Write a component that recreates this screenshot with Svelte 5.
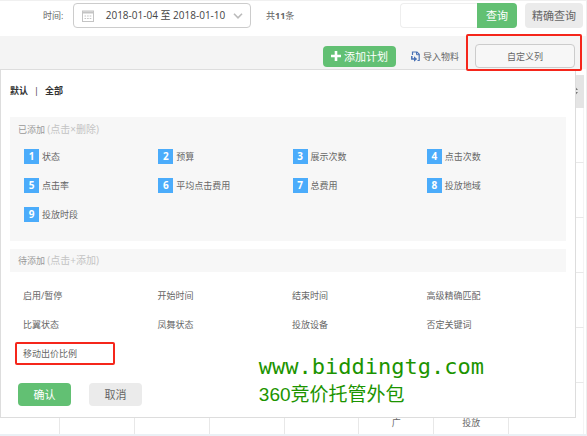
<script lang="ts">
  let added = $state([
    "状态", "预算", "展示次数", "点击次数",
    "点击率", "平均点击费用", "总费用", "投放地域",
    "投放时段",
  ]);

  let waiting = $state([
    "启用/暂停", "开始时间", "结束时间", "高级精确匹配",
    "比翼状态", "凤舞状态", "投放设备", "否定关键词",
    "移动出价比例",
  ]);

  const highlighted = "移动出价比例";
  const columns = ["", "", "", "", "", "广", "投放", ""];
  const emptyRows = [1, 2, 3, 4, 5];

  let keyword = $state("");
  let showPanel = $state(true);

  function addColumn(name: string) {
    waiting = waiting.filter((item) => item !== name);
    added = [...added, name];
  }

  function removeColumn(name: string) {
    added = added.filter((item) => item !== name);
    waiting = [...waiting, name];
  }

  function addAll() {
    added = [...added, ...waiting];
    waiting = [];
  }
</script>

<div class="page">
  <header class="filters">
    <label class="caption" for="date-range">时间:</label>
    <button class="date-range" id="date-range">
      <svg width="12" height="12" viewBox="0 0 12 12" fill="none" stroke="#c4c4c4">
        <rect x="0.5" y="1" width="11" height="10.5" />
        <path d="M0.5 2.5h11" stroke-width="2" />
        <path d="M2.5 6h7M2.5 8.5h7" stroke-dasharray="1.6 1" />
      </svg>
      <span>2018-01-04 至 2018-01-10</span>
      <svg width="10" height="6" viewBox="0 0 10 6" fill="none" stroke="#bbb" stroke-width="1.6">
        <path d="M1 0.8l4 4 4-4" />
      </svg>
    </button>
    <span class="total">共<b>11</b>条</span>
    <form class="search" onsubmit={(e) => e.preventDefault()}>
      <input type="text" aria-label="查询" bind:value={keyword} />
      <button class="query">查询</button>
    </form>
    <button class="exact">精确查询</button>
  </header>

  <div class="toolbar">
    <button class="add-plan">
      <svg width="10" height="10" viewBox="0 0 10 10" stroke="#fff" stroke-width="2.6">
        <path d="M5 0v10M0 5h10" />
      </svg>
      添加计划
    </button>
    <button class="import">
      <svg width="9" height="11" viewBox="0 0 9 11" fill="none" stroke="#4a72b5">
        <path d="M1.5 4V1H6l2.2 2.2v6.3H6.5" stroke-width="1.2" />
        <path d="M5.5 1v2.7h2.7" />
        <path d="M0.8 5v3h3" stroke-width="1.5" />
        <path d="M3 5.2L6.2 8 3 10.8z" fill="#4a72b5" stroke="none" />
      </svg>
      导入物料
    </button>
    <div class="customize">
      <button onclick={() => (showPanel = !showPanel)}>自定义列</button>
    </div>
  </div>

  <main class="content">
    <table>
      <thead>
        <tr>
          {#each columns as _, i}
            <th>
              {#if i === columns.length - 1}
                <svg width="5" height="8" viewBox="0 0 5 8" fill="#777">
                  <path d="M0 3l2.5-3L5 3zM0 5h5L2.5 8z" />
                </svg>
              {/if}
            </th>
          {/each}
        </tr>
      </thead>
      <tbody>
        {#each emptyRows as row (row)}
          <tr>
            {#each columns as _}<td></td>{/each}
          </tr>
        {/each}
        <tr>
          {#each columns as text}<td>{text}</td>{/each}
        </tr>
      </tbody>
    </table>

    {#if showPanel}
      <section class="panel">
        <div class="presets">
          <button>默认</button>
          <span>|</span>
          <button onclick={addAll}>全部</button>
        </div>

        <div class="added">
          <h3>已添加 <span>(点击×删除)</span></h3>
          <ul class="added-list">
            {#each added as name, i (name)}
              <li>
                <button onclick={() => removeColumn(name)}><b>{i + 1}</b>{name}</button>
              </li>
            {/each}
          </ul>
        </div>

        <h3 class="waiting-title">待添加 <span>(点击+添加)</span></h3>
        <ul class="waiting-list">
          {#each waiting as name (name)}
            <li class:marked={name === highlighted}>
              <button onclick={() => addColumn(name)}>{name}</button>
            </li>
          {/each}
        </ul>

        <div class="actions">
          <button class="confirm" onclick={() => (showPanel = false)}>确认</button>
          <button class="cancel" onclick={() => (showPanel = false)}>取消</button>
        </div>

        <div class="watermark">
          <p class="site">www.biddingtg.com</p>
          <p class="slogan">360竞价托管外包</p>
        </div>
      </section>
    {/if}
  </main>
</div>

<style>
  :global(body) {
    margin: 0;
    background: #fff;
  }

  .page {
    box-sizing: border-box;
    border-top: 1px solid #f0f0f0;
    border-right: 1px solid #eee;
    border-bottom: 2px solid #eaf0f5;
    font-family: "Open Sans", "Noto Sans CJK SC", sans-serif;
    font-size: 9px;
    line-height: 15px;
    color: #666;
  }

  button,
  input {
    box-sizing: border-box;
    margin: 0;
    padding: 0;
    border: 0;
    background: none;
    font: inherit;
    color: inherit;
  }

  button {
    cursor: pointer;
  }

  .filters {
    display: flex;
    align-items: center;
    height: 35px;
    padding: 0 3px 6px 43px;
    box-sizing: border-box;
  }

  .caption {
    width: 30px;
  }

  .date-range {
    display: flex;
    align-items: center;
    width: 178px;
    height: 25px;
    padding: 0 7px 0 8px;
    border: 1px solid #ccc;
    border-radius: 4px;
    font-size: 10px;
    color: #444;
  }

  .date-range span {
    flex: 1;
    padding-left: 4px;
    text-align: center;
    white-space: nowrap;
  }

  .total {
    margin-left: 15px;
  }

  .search {
    display: flex;
    margin-left: auto;
  }

  .search input {
    width: 77px;
    height: 25px;
    padding: 0 6px;
    border: 1px solid #eee;
    border-right: 0;
    border-radius: 4px 0 0 4px;
  }

  .query {
    width: 40px;
    height: 25px;
    border-radius: 0 4px 4px 0;
    background: #62c073;
    font-size: 11px;
    color: #fff;
  }

  .exact {
    width: 58px;
    height: 25px;
    margin-left: 8px;
    border-radius: 4px;
    background: #ebebeb;
    font-size: 11px;
  }

  .toolbar {
    display: flex;
    justify-content: flex-end;
    align-items: center;
    height: 33px;
    padding: 7px 11px 0 0;
    box-sizing: border-box;
    background: #f4f4f4;
  }

  .add-plan {
    display: flex;
    align-items: center;
    justify-content: center;
    gap: 3px;
    width: 73px;
    height: 21px;
    border-radius: 4px;
    background: #62c073;
    font-size: 11px;
    color: #fff;
  }

  .import {
    display: flex;
    align-items: center;
    gap: 3px;
    margin: 0 16px 0 15px;
  }

  .customize {
    position: relative;
    z-index: 2;
  }

  .customize button {
    width: 100px;
    height: 24px;
    border: 1px solid #ccc;
    border-radius: 4px;
    background: #f7f7f7;
  }

  .customize::after {
    content: "";
    position: absolute;
    inset: -10px -7px -3px -9px;
    border: 2px solid #f5261b;
    border-radius: 2px;
    pointer-events: none;
  }

  .content {
    position: relative;
    padding: 6px 2px 0 0;
  }

  table {
    width: 100%;
    border-collapse: separate;
    border-spacing: 0;
    table-layout: fixed;
  }

  th {
    box-sizing: border-box;
    height: 33px;
    padding: 0 6px 0 0;
    background: #e4e4e4;
    text-align: right;
  }

  th:first-child {
    width: 60px;
  }

  td {
    box-sizing: border-box;
    height: 55px;
    padding: 0 0 4px;
    border-right: 1px solid #e8e8e8;
    border-bottom: 1px solid #e8e8e8;
    text-align: center;
    vertical-align: bottom;
  }

  td:last-child {
    border-right-color: #f4f4f4;
  }

  tr:last-child td {
    height: 51px;
    border-bottom: 0;
  }

  .panel {
    position: absolute;
    top: 0;
    left: 0;
    right: 10px;
    box-sizing: border-box;
    padding: 13px 9px 11px;
    border: 1px solid #ddd;
    background: #fff;
  }

  .presets {
    display: flex;
    gap: 6px;
    height: 34px;
    color: #333;
  }

  .presets button {
    height: 15px;
    font-weight: bold;
  }

  h3 {
    margin: 0;
    font-size: 9px;
    font-weight: normal;
    color: #999;
  }

  h3 span {
    font-size: 10px;
    color: #c4c4c4;
  }

  .added {
    padding: 5px 5px 19px 8px;
    background: #f7f7f7;
  }

  ul {
    display: grid;
    grid-template-columns: repeat(4, 1fr);
    row-gap: 14px;
    margin: 0;
    padding: 0;
    list-style: none;
  }

  li {
    height: 15px;
  }

  .added-list {
    padding: 12px 0 0 6px;
  }

  .added-list button {
    display: flex;
    gap: 3px;
  }

  .added-list b {
    width: 15px;
    height: 15px;
    background: #4bacfb;
    font-size: 10px;
    text-align: center;
    color: #fff;
  }

  .waiting-title {
    margin-top: 8px;
    padding: 4px 8px;
    background: #f7f7f7;
  }

  .waiting-list {
    padding: 16px 5px 0 13px;
  }

  .marked {
    position: relative;
  }

  .marked::after {
    content: "";
    position: absolute;
    inset: -4px 43px -4px -8px;
    border: 2px solid #f5261b;
    border-radius: 2px;
    pointer-events: none;
  }

  .actions {
    display: flex;
    gap: 18px;
    padding: 22px 0 0 8px;
  }

  .actions button {
    width: 53px;
    height: 23px;
    border-radius: 4px;
    font-size: 11px;
  }

  .actions .confirm {
    background: #62c073;
    color: #fff;
  }

  .actions .cancel {
    background: #ebebeb;
  }

  /* stamped over the lower right part of the panel */
  .watermark {
    position: absolute;
    right: 91px;
    bottom: 8px;
    color: #1c9400;
  }

  .watermark p {
    margin: 0;
    line-height: 28px;
  }

  .site {
    font-family: "DejaVu Sans Mono", monospace;
    font-size: 22px;
  }

  .slogan {
    font-family: "Liberation Sans", "Noto Sans CJK SC", sans-serif;
    font-size: 19px;
  }
</style>
